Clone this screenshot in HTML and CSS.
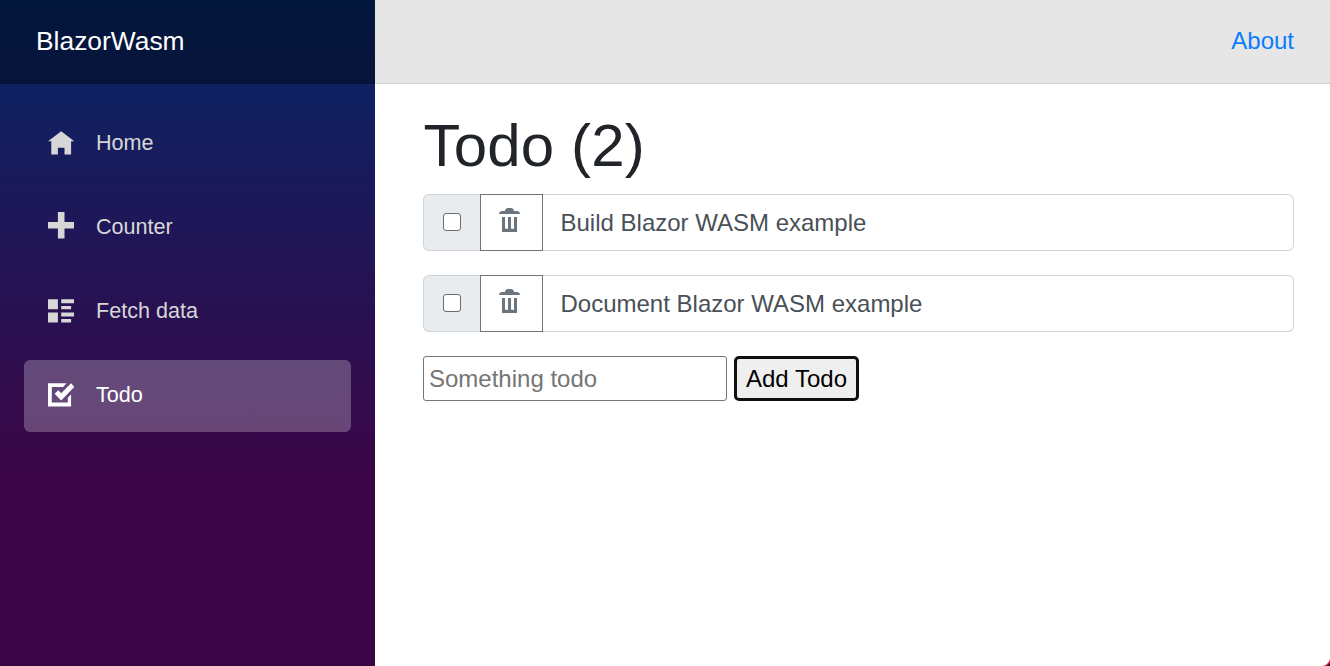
FILE: index.html
```html
<!DOCTYPE html>
<html lang="en">
<head>
<meta charset="utf-8">
<title>BlazorWasm</title>
<link rel="stylesheet" href="styles.css">
</head>
<body>
<div class="page">
  <div class="sidebar">
    <div class="brand-row"><a class="brand">BlazorWasm</a></div>
    <nav class="nav">
      <a class="nav-link"><svg class="icon" viewBox="0 0 8 8"><path transform="translate(0 1)" d="M4 0l-4 3h1v4h2v-2h2v2h2v-4h1l-4-3z"/></svg>Home</a>
      <a class="nav-link"><svg class="icon" viewBox="0 0 8 8"><path d="M3 0v3h-3v2h3v3h2v-3h3v-2h-3v-3h-2z"/></svg>Counter</a>
      <a class="nav-link"><svg class="icon" viewBox="0 0 8 8"><path transform="translate(0 1)" d="M0 0v3h3v-3h-3zm4 0v1.2h4v-1.2h-4zm0 2v1h3v-1h-3zm-4 2v3h3v-3h-3zm4 0v1.2h4v-1.2h-4zm0 2v1h3v-1h-3z"/></svg>Fetch data</a>
      <a class="nav-link active"><svg class="icon" viewBox="0 0 8 8"><path transform="translate(0 1)" d="M0 0v7h7v-3.59l-1 1v1.44h-4.85v-4.7h3.44l1-1.15h-5.59zm7 0l-3 3-.9-.9-1.1 1.1 2 2 4-4.1-1-1.1z"/></svg>Todo</a>
    </nav>
  </div>
  <div class="main">
    <div class="top-row"><a class="about">About</a></div>
    <div class="content">
      <h1 class="title">Todo (2)</h1>
      <div class="input-group">
        <div class="check-cell"><input class="check" type="checkbox"></div>
        <button class="trash-button"><svg class="trash" viewBox="0 0 8 8"><path d="M3 0c-.55 0-1 .45-1 1h-1c-.55 0-1 .45-1 1h7c0-.55-.45-1-1-1h-1c0-.55-.45-1-1-1h-1zm-2 3v5h5v-5h-1v3.8c0 .13-.1.2-.25.2s-.75-.1-.75-.3v-3.7h-1v3.8c0 .13-.1.2-.25.2s-.75-.1-.75-.3v-3.7h-1z"/></svg></button>
        <input class="todo-text" value="Build Blazor WASM example">
      </div>
      <div class="input-group">
        <div class="check-cell"><input class="check" type="checkbox"></div>
        <button class="trash-button"><svg class="trash" viewBox="0 0 8 8"><path d="M3 0c-.55 0-1 .45-1 1h-1c-.55 0-1 .45-1 1h7c0-.55-.45-1-1-1h-1c0-.55-.45-1-1-1h-1zm-2 3v5h5v-5h-1v3.8c0 .13-.1.2-.25.2s-.75-.1-.75-.3v-3.7h-1v3.8c0 .13-.1.2-.25.2s-.75-.1-.75-.3v-3.7h-1z"/></svg></button>
        <input class="todo-text" value="Document Blazor WASM example">
      </div>
      <div class="add-row">
        <input class="new-todo" placeholder="Something todo">
        <button class="add-button">Add Todo</button>
      </div>
    </div>
  </div>
  <svg class="corner" viewBox="0 0 8 8"><path fill="#e4284f" d="M8 0v8H0C4 7 7 4 8 0z"/><path fill="#2a0b12" d="M8 4v4H4C6 7 7 6 8 4z"/></svg>
</div>
</body>
</html>
```
FILE: styles.css
```css
* { box-sizing: border-box; }
html { font-size: 24px; }
body {
  margin: 0;
  overflow: hidden;
  background: #fff;
  color: #212529;
  font-family: "Liberation Sans", Arial, sans-serif;
  line-height: 1.5;
}
input, button { margin: 0; font: inherit; }
.page { position: relative; display: flex; height: 100vh; }
.sidebar {
  width: 375px;
  flex: none;
  background: linear-gradient(180deg, rgb(5, 39, 103) 0%, #3a0647 70%);
}
.brand-row {
  display: flex;
  align-items: center;
  height: 84px;
  padding: 0 36px;
  background: rgba(0, 0, 0, 0.4);
}
.brand { color: #fff; font-size: 26.4px; }
.nav {
  display: flex;
  flex-direction: column;
  gap: 12px;
  padding: 24px;
}
.nav-link {
  display: flex;
  align-items: center;
  height: 72px;
  padding: 0 0 1px 24px;
  border-radius: 6px;
  color: #d7d7d7;
  font-size: 21.6px;
}
.active { background: rgba(255, 255, 255, 0.25); color: #fff; }
.icon {
  width: 26.4px;
  height: 26.4px;
  margin: 0 21.6px 4px 0;
  fill: currentColor;
}
.main { flex: 1; min-width: 0; }
.top-row {
  display: flex;
  align-items: center;
  justify-content: flex-end;
  height: 84px;
  padding: 0 36px 2px;
  border-bottom: 1px solid #d0d0d0;
  background: #e6e6e6;
}
.about { color: #0a7cff; }
.content { padding: 26px 36px 0 48px; }
.title {
  margin: 0 0 12px;
  padding-left: 0.5px;
  font-size: 60px;
  font-weight: 500;
  line-height: 72px;
  letter-spacing: 0.15px;
}
.input-group { display: flex; height: 57px; margin-bottom: 24px; }
.check-cell {
  display: flex;
  align-items: center;
  justify-content: center;
  width: 57px;
  padding-bottom: 2px;
  border: 1px solid #ced4da;
  border-right: 0;
  border-radius: 6px 0 0 6px;
  background: #e9ecef;
}
.check {
  width: 18px;
  height: 18px;
  appearance: none;
  border: 1px solid #6b6b6b;
  border-radius: 3px;
  background: #fff;
}
.trash-button {
  display: flex;
  align-items: center;
  width: 63px;
  padding: 0 0 5px 18px;
  border: 1px solid #6c757d;
  background: #fff;
}
.trash { width: 24px; height: 24px; fill: #6c757d; }
.todo-text {
  flex: 1;
  min-width: 0;
  padding: 0 17.5px;
  border: 1px solid #ced4da;
  border-left: 0;
  border-radius: 0 6px 6px 0;
  background: #fff;
  color: #495057;
}
.add-row { display: flex; gap: 7px; height: 45px; }
.new-todo {
  width: 304px;
  padding: 0 5px;
  border: 1px solid #767676;
  border-radius: 3px;
}
.new-todo::placeholder { color: #757575; }
.add-button {
  width: 125px;
  padding: 0;
  border: 3px solid #101010;
  border-radius: 5px;
  background: #efefef;
  color: #000;
  white-space: nowrap;
}
.corner {
  position: absolute;
  right: 0;
  bottom: 0;
  width: 7px;
  height: 7px;
}
```
